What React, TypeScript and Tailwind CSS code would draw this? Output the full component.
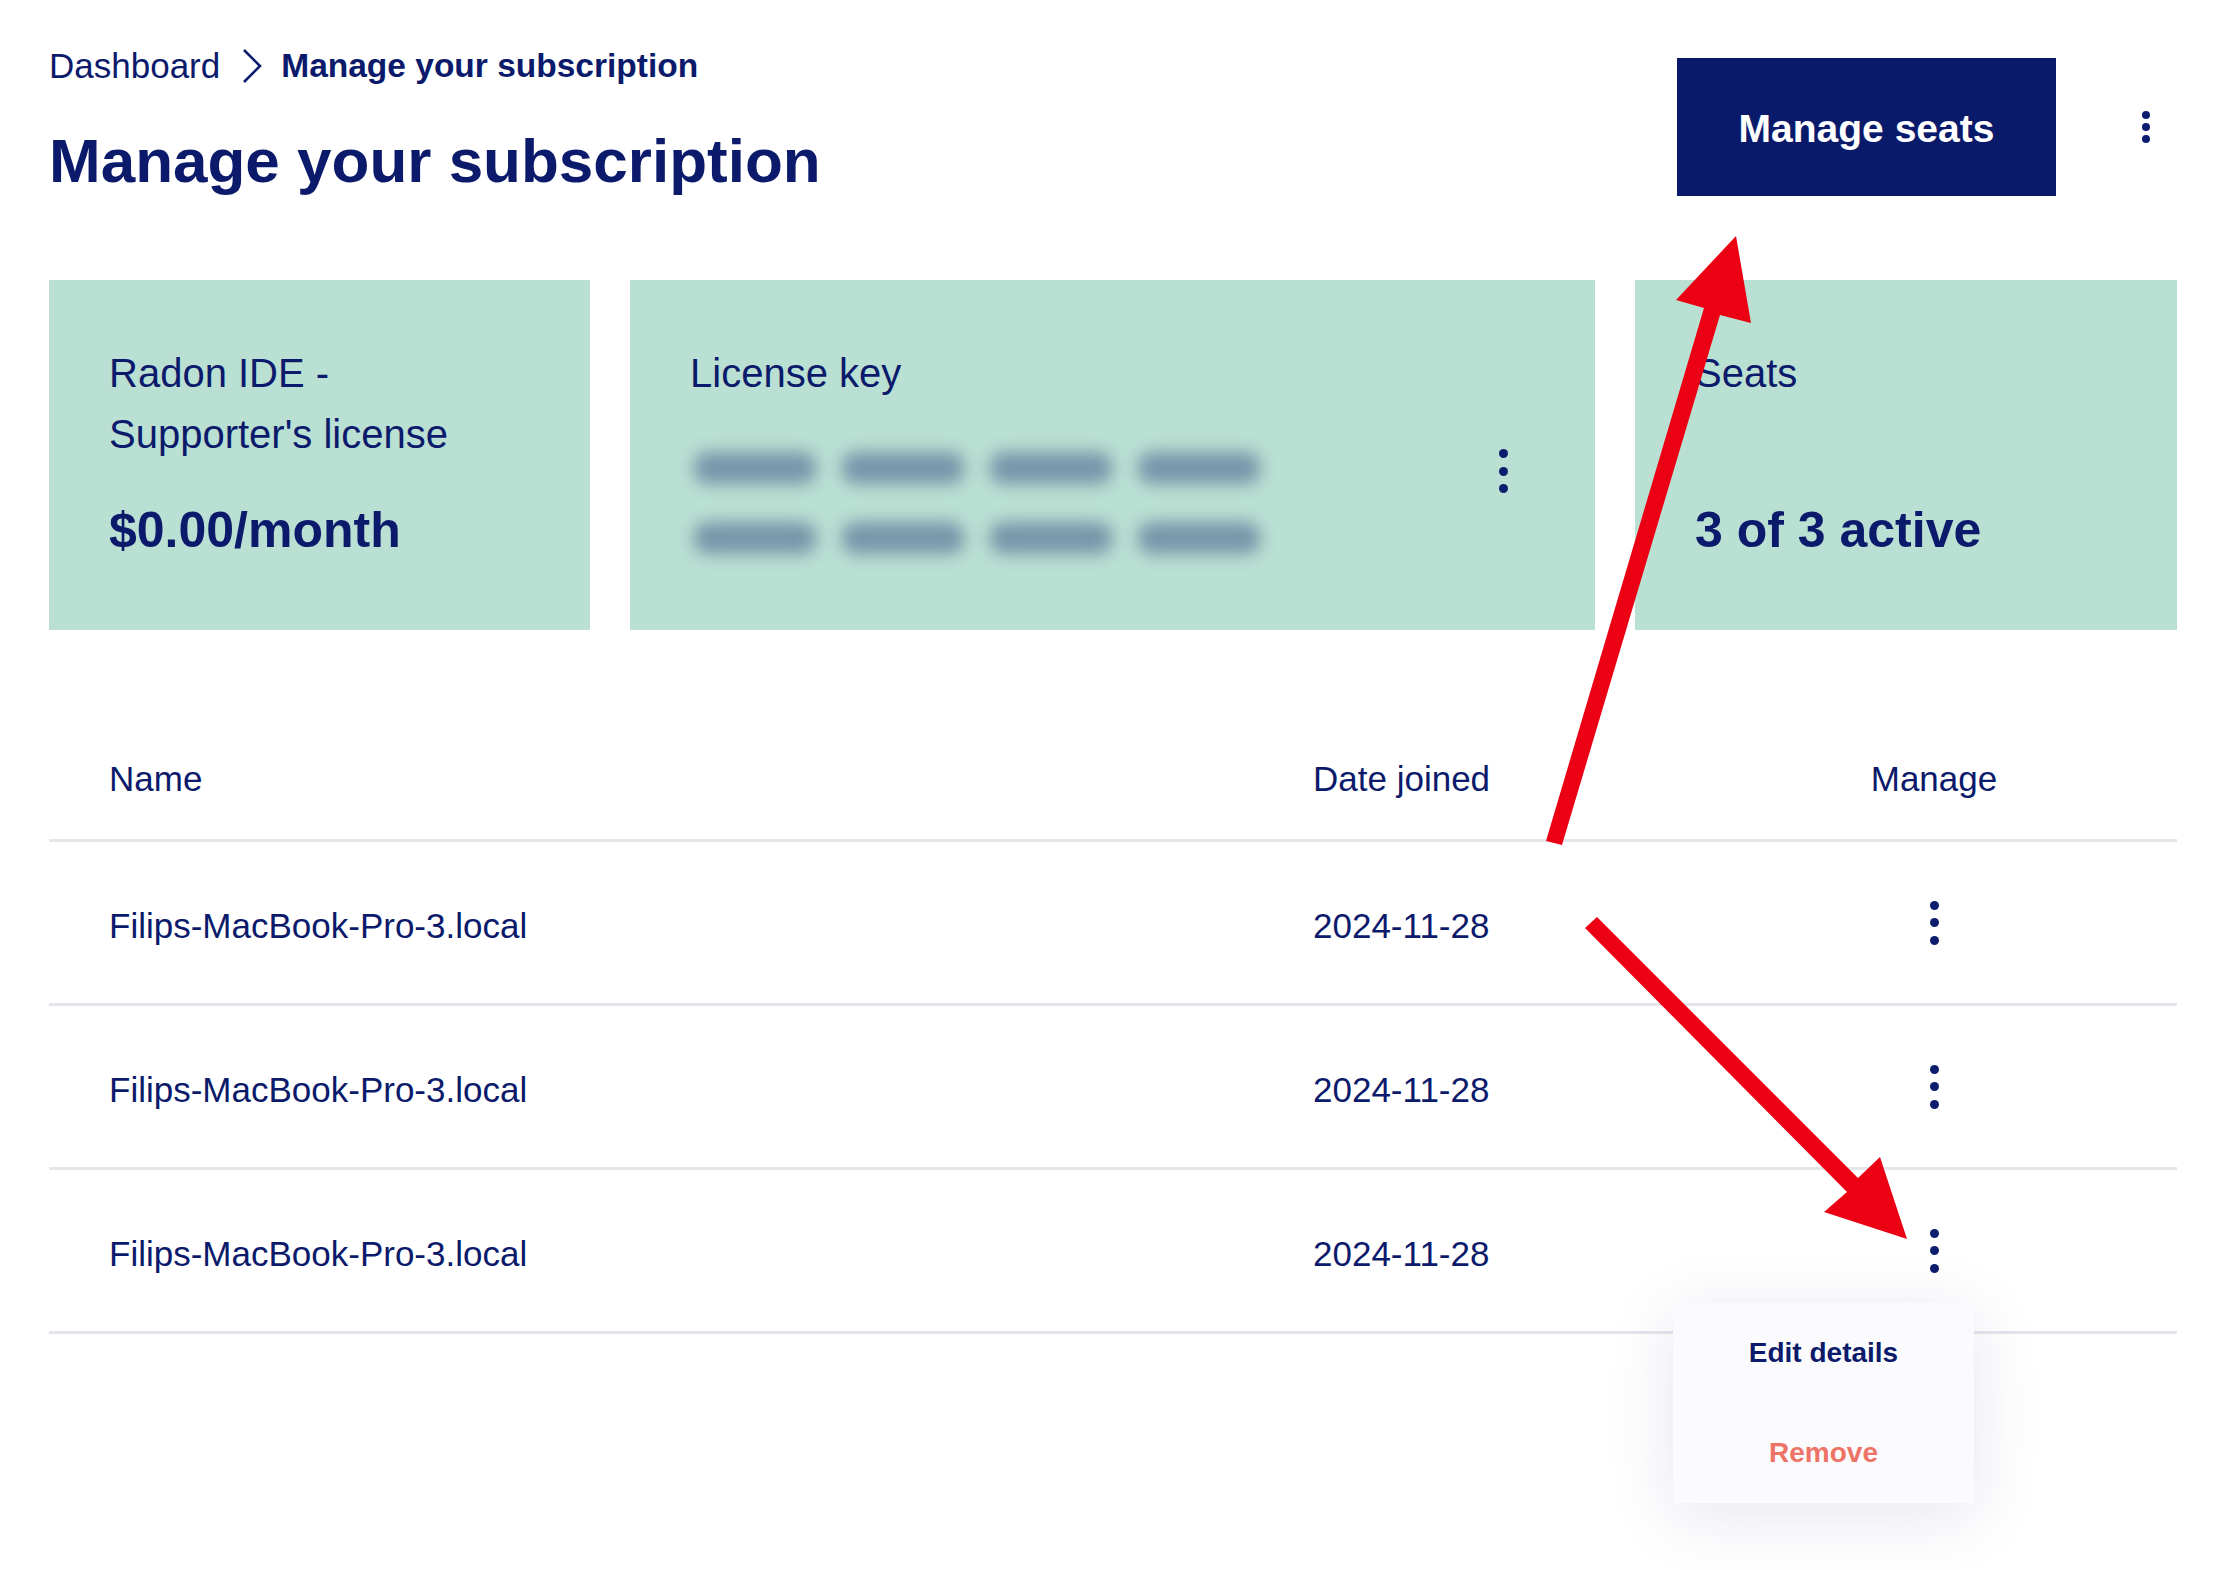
import React from "react";

function Kebab({ size = 9, gap = 8.5, color = "bg-[#0d1d6e]" }: { size?: number; gap?: number; color?: string }) {
  return (
    <div className="flex flex-col items-center" style={{ gap: `${gap}px` }}>
      {[0, 1, 2].map((i) => (
        <span key={i} className={`block rounded-full ${color}`} style={{ width: size, height: size }} />
      ))}
    </div>
  );
}

function KeyPill() {
  return <div className="h-[32px] w-[122px] rounded-[14px] bg-[#7896aa] blur-[8px]" />;
}

const rows = [
  { name: "Filips-MacBook-Pro-3.local", date: "2024-11-28" },
  { name: "Filips-MacBook-Pro-3.local", date: "2024-11-28" },
  { name: "Filips-MacBook-Pro-3.local", date: "2024-11-28" },
];

export default function App() {
  return (
    <div className="relative w-[2214px] min-h-[1570px] bg-white text-[#0b1a6b] font-['Liberation_Sans',Arial,sans-serif] overflow-hidden">
      <div className="pl-[49px] pr-[37px] pt-[46px]">
        {/* Header */}
        <div className="flex items-start justify-between">
          <div className="flex flex-col">
            <nav className="flex items-center h-[40px] text-[35px] leading-[40px]">
              <span>Dashboard</span>
              <svg className="ml-[20px] mr-[19px]" width="22" height="36" viewBox="0 0 22 36" fill="none">
                <polyline points="4,2 20,18 4,34" stroke="#0b1a6b" strokeWidth="2.6" strokeLinejoin="miter" />
              </svg>
              <span className="font-semibold text-[33.5px]">Manage your subscription</span>
            </nav>
            <h1 className="mt-[37px] text-[62px] leading-[76px] font-bold">Manage your subscription</h1>
          </div>
          <div className="flex items-center mt-[12px]">
            <button className="w-[379px] h-[138px] pt-[4px] bg-[#091a6b] text-white text-[39px] font-bold flex items-center justify-center">
              Manage seats
            </button>
            <div className="w-[62px] ml-[59px] flex justify-center">
              <Kebab size={8} gap={4} />
            </div>
          </div>
        </div>

        {/* Cards */}
        <div className="mt-[81px] grid grid-cols-[541px_965px_542px] gap-x-[40px]">
          <div className="h-[350px] bg-[#badfd3] px-[60px] pt-[63px] pb-[70px] flex flex-col justify-between">
            <div className="text-[40px] leading-[61px]">
              Radon IDE -<br />Supporter's license
            </div>
            <div className="text-[50px] leading-[60px] font-bold">$0.00/month</div>
          </div>
          <div className="h-[350px] bg-[#badfd3] pl-[60px] pr-[72px] pt-[63px]">
            <div className="text-[40px] leading-[61px]">License key</div>
            <div className="mt-[48px] flex items-start justify-between">
              <div className="flex flex-col gap-[38px] pl-[4px]">
                <div className="flex gap-[26px]">
                  <KeyPill />
                  <KeyPill />
                  <KeyPill />
                  <KeyPill />
                </div>
                <div className="flex gap-[26px]">
                  <KeyPill />
                  <KeyPill />
                  <KeyPill />
                  <KeyPill />
                </div>
              </div>
              <div className="w-[40px] flex justify-center mt-[-3px]">
                <Kebab />
              </div>
            </div>
          </div>
          <div className="h-[350px] bg-[#badfd3] px-[60px] pt-[63px] pb-[70px] flex flex-col justify-between">
            <div className="text-[40px] leading-[61px]">Seats</div>
            <div className="text-[50px] leading-[60px] font-bold">3 of 3 active</div>
          </div>
        </div>

        {/* Table */}
        <div className="mt-[84px]">
          <div className="flex items-center h-[128px] border-b-[3px] border-[#e5e6ec] text-[35px]">
            <div className="flex-1 pl-[60px] pt-[6px]">Name</div>
            <div className="w-[378px] pt-[6px]">Date joined</div>
            <div className="w-[486px] pt-[6px] text-center">Manage</div>
          </div>
          {rows.map((r, i) => (
            <div key={i} className="flex items-center h-[164px] border-b-[3px] border-[#e5e6ec] text-[35px]">
              <div className="flex-1 pl-[60px] pt-[8px]">{r.name}</div>
              <div className="w-[378px] pt-[8px]">{r.date}</div>
              <div className="relative w-[486px] h-full flex items-center justify-center">
                <Kebab />
                {i === rows.length - 1 && (
                  <div className="absolute left-[-18px] top-[133px] z-10 w-[301px] bg-[#fbfbfd] shadow-[0_12px_70px_rgba(30,30,100,0.11)] flex flex-col">
                    <div className="h-[100px] flex items-center justify-center text-[28px] font-bold text-[#0b1a6b]">
                      Edit details
                    </div>
                    <div className="h-[100px] flex items-center justify-center text-[28px] font-bold text-[#ee7367]">
                      Remove
                    </div>
                  </div>
                )}
              </div>
            </div>
          ))}
        </div>
      </div>

      {/* Annotation arrows */}
      <svg className="pointer-events-none absolute left-0 top-0 z-20" width="2214" height="1570" viewBox="0 0 2214 1570">
        <polygon
          fill="#ec0013"
          points="1546,841 1704,308 1676,300 1736,236 1751,323 1720,315 1562,845"
        />
        <polygon
          fill="#ec0013"
          points="1597,917 1858,1178 1880,1157 1907,1239 1824,1212 1847,1192 1585,928"
        />
      </svg>
    </div>
  );
}
